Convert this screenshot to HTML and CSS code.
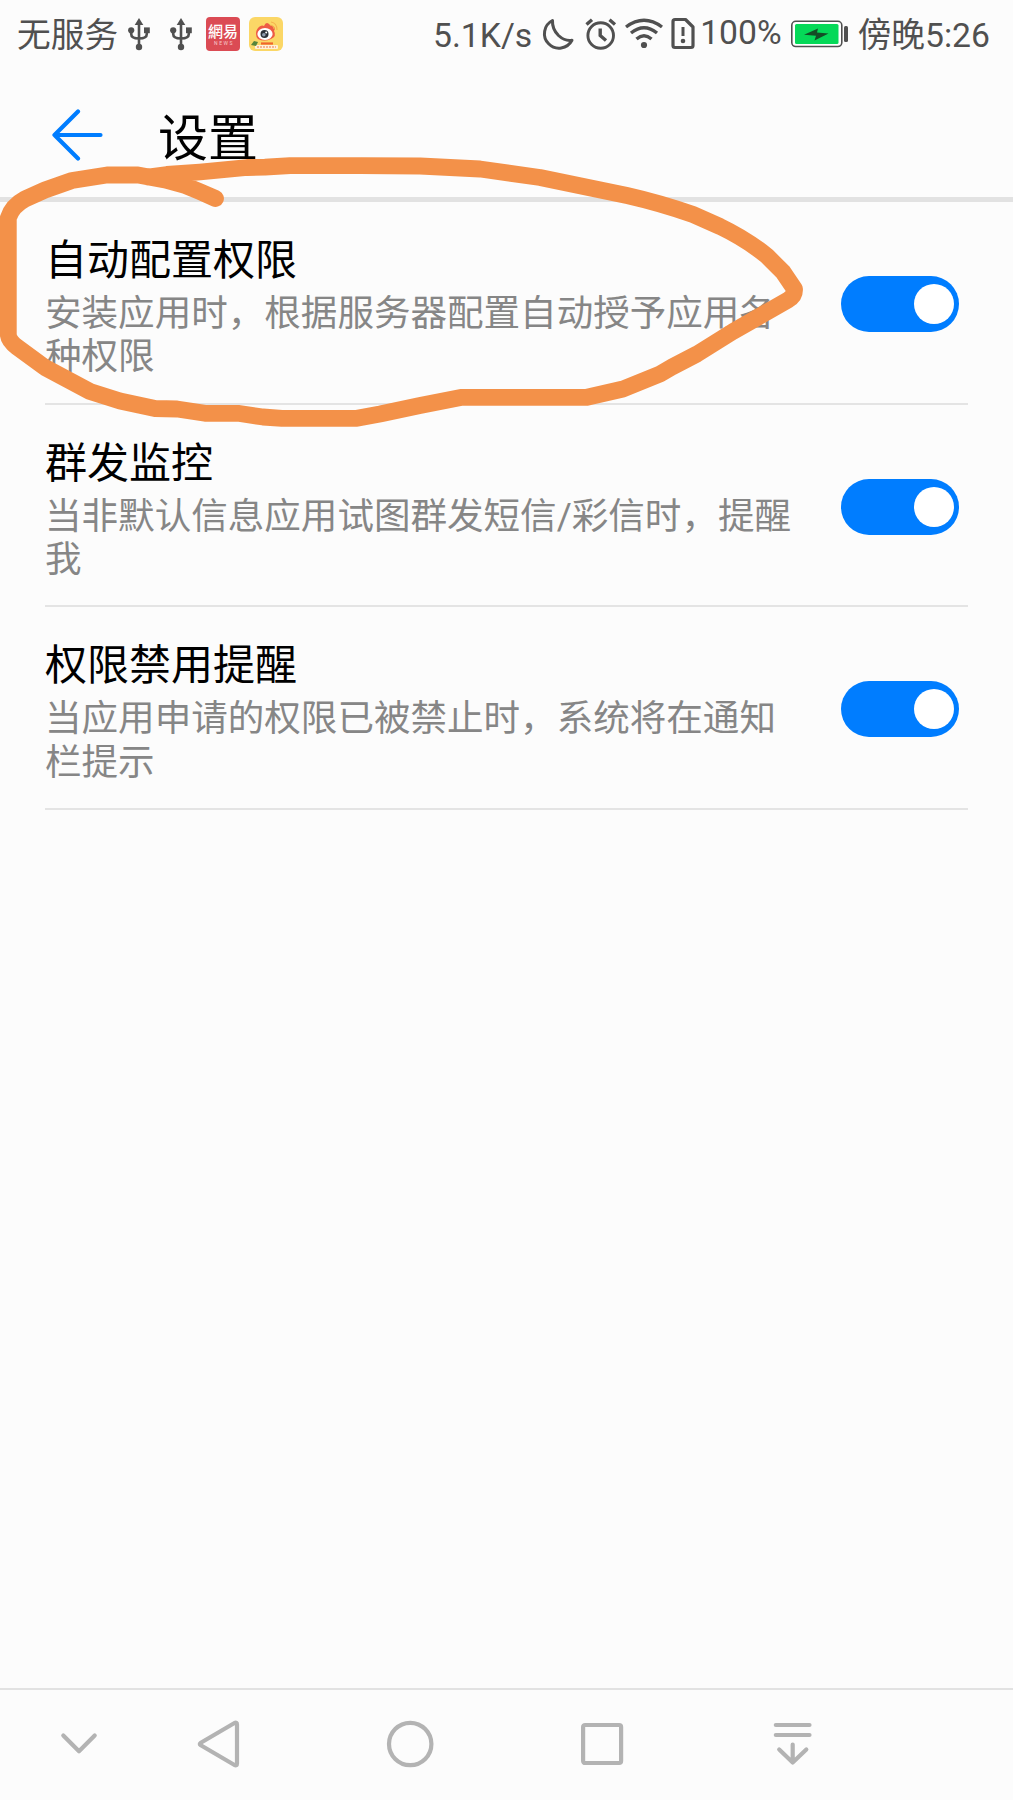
FILE: index.html
```html
<!DOCTYPE html>
<html lang="zh-CN">
<head>
<meta charset="utf-8">
<title>设置</title>
<link rel="stylesheet" href="styles.css">
</head>
<body>
<div class="screen">
  <div class="status">
    <span class="carrier">无服务</span>
    <svg class="usb" width="22" height="34" viewBox="0 0 22 34"><g fill="none" stroke="#505050" stroke-width="2.6"><path d="M11 6V29M3.2 14V17Q3.2 21.5 11 21.5Q18.8 21.5 18.8 17V14"/></g><g fill="#505050"><path d="M11 1L15.3 8H6.7Z"/><circle cx="3.2" cy="13.3" r="3.1"/><rect x="16" y="10.4" width="5.8" height="5.8"/><circle cx="11" cy="30" r="3.2"/></g></svg>
    <svg class="usb second" width="22" height="34" viewBox="0 0 22 34"><g fill="none" stroke="#505050" stroke-width="2.6"><path d="M11 6V29M3.2 14V17Q3.2 21.5 11 21.5Q18.8 21.5 18.8 17V14"/></g><g fill="#505050"><path d="M11 1L15.3 8H6.7Z"/><circle cx="3.2" cy="13.3" r="3.1"/><rect x="16" y="10.4" width="5.8" height="5.8"/><circle cx="11" cy="30" r="3.2"/></g></svg>
    <svg class="news" width="34" height="34" viewBox="0 0 34 34"><rect width="34" height="34" rx="4" fill="#db4b54"/><text class="news-name" x="17" y="19.5" text-anchor="middle">網易</text><text class="news-sub" x="18" y="27.5" text-anchor="middle">NEWS</text></svg>
    <svg class="weibo" width="34" height="34" viewBox="0 0 34 34"><rect width="34" height="34" rx="6" fill="#fbd766"/><path d="M7 17C7 11 12 7 15 9Q17 4 20 7Q21 9 24 9Q27 11 25 14Q28 19 22 22Q15 25 9 22Q7 20 7 17Z" fill="#ee5b45"/><ellipse cx="16" cy="17" rx="7.600" ry="6" fill="#fff"/><circle cx="15.5" cy="17" r="4" fill="#2b3038"/><circle cx="14.800" cy="17.800" r="1.8" fill="#8f9bad"/><circle cx="17.200" cy="15.500" r="1" fill="#fff"/><path d="M22 5Q28 6 28 13M21.500 8Q25 9 25 12" fill="none" stroke="#f5b04e" stroke-width="1.1"/><rect x="6" y="28" width="23" height="4" rx="1" fill="#fff1d8"/><path d="M12 26.500H24" stroke="#f0642d" stroke-width="2.200"/><path d="M8 30H27" stroke="#f4a07a" stroke-width="1.500" stroke-dasharray="2 1"/><path d="M2 28L5 24L9 25L7 29Z" fill="#56853b"/></svg>
    <div class="spacer"></div>
    <span class="speed">5.1K/s</span>
    <svg class="moon" width="34" height="34" viewBox="0 0 34 34"><path d="M11.500 3.500A14.600 14.600 0 1 0 31 23.300Q24 24.500 17.500 18.500Q11 12 11.500 3.500Z" fill="none" stroke="#505050" stroke-width="3" stroke-linejoin="round"/></svg>
    <svg class="alarm" width="32" height="34" viewBox="0 0 32 34"><g fill="none" stroke="#505050" stroke-width="2.900" stroke-linecap="butt"><circle cx="15.700" cy="18.500" r="12.800"/><path stroke-width="3.400" d="M15.200 11.500V18.500L21 23.500M1.500 7.500L7 2.800M30 7.500L24.500 2.800"/></g></svg>
    <svg class="wifi" width="38" height="34" viewBox="0 0 38 34"><g fill="none" stroke="#505050" stroke-width="3.400"><path d="M1 10Q19-3.500 37 10M6 16Q19 5.500 32 16M11.500 22Q19 15.500 26.500 22"/></g><circle cx="19" cy="28" r="3.100" fill="#505050"/></svg>
    <svg class="sim" width="24" height="34" viewBox="0 0 24 34"><path d="M4 2.500H14.500L22 10V28.500Q22 30.500 20 30.500H4Q2 30.500 2 28.500V4.500Q2 2.500 4 2.500Z" fill="none" stroke="#505050" stroke-width="3.200" stroke-linejoin="round"/><path d="M12 10V19" stroke="#505050" stroke-width="3"/><circle cx="12" cy="24" r="2.300" fill="#505050"/></svg>
    <span class="percent">100%</span>
    <svg class="battery" width="58" height="28" viewBox="0 0 58 28"><rect x=".8" y="1.300" width="50" height="25.200" rx="4" fill="#fff" stroke="#505050" stroke-width="1.600"/><rect x="4" y="4" width="43.500" height="20" rx="1.500" fill="#05d958"/><path d="M13 14.800L27 8.500L26 12.500L37.500 13.500L23.500 20.500L25 15.800Z" fill="#144d26"/><rect x="53" y="6" width="4" height="16" rx="1.500" fill="#505050"/></svg>
    <span class="clock">傍晚5:26</span>
  </div>

  <header class="header">
    <svg class="back" width="54" height="52" viewBox="0 0 54 52"><path d="M28 2.500L4.500 26L28 49.500M4.500 26H50.500" fill="none" stroke="#007dff" stroke-width="4.200" stroke-linecap="round" stroke-linejoin="round"/></svg>
    <h1 class="heading">设置</h1>
  </header>

  <main class="list">
    <section class="row">
      <div class="text"><h2 class="title">自动配置权限</h2><p class="desc">安装应用时，根据服务器配置自动授予应用各种权限</p></div>
      <div class="switch"><div class="knob"></div></div>
    </section>
    <section class="row">
      <div class="text"><h2 class="title">群发监控</h2><p class="desc">当非默认信息应用试图群发短信/彩信时，提醒我</p></div>
      <div class="switch"><div class="knob"></div></div>
    </section>
    <section class="row">
      <div class="text"><h2 class="title">权限禁用提醒</h2><p class="desc">当应用申请的权限已被禁止时，系统将在通知栏提示</p></div>
      <div class="switch"><div class="knob"></div></div>
    </section>
  </main>

  <nav class="nav">
    <div class="key first"><svg width="48" height="48" viewBox="0 0 48 48"><path d="M8.300 15.500L24 31.200L39.700 15.500"/></svg></div>
    <div class="key"><svg width="48" height="48" viewBox="0 0 48 48"><path d="M5.800 22.700L39.500 3Q42 2 42 4.500V43.500Q42 46 39.500 45L5.800 25.300Q3.800 24 5.800 22.700Z"/></svg></div>
    <div class="key"><svg width="48" height="48" viewBox="0 0 48 48"><circle cx="24.200" cy="24" r="21.200"/></svg></div>
    <div class="key"><svg width="48" height="48" viewBox="0 0 48 48"><rect x="5.100" y="5" width="38" height="38" rx="2"/></svg></div>
    <div class="key"><svg width="48" height="48" viewBox="0 0 48 48"><path d="M6.800 5H40.500M6.800 15H40.500M23.700 24.500V42.500M10.200 29.500L23.700 42.500L37.300 29.500"/></svg></div>
  </nav>

  <svg class="mark" width="1013" height="440" viewBox="0 0 1013 440"><path d="M215.500 198.500Q199 191 185 185.500L165 180L138 175H107L72 180.500L45 190L25 199Q12 206 8.300 218V335Q9 341 17 347L45 367.500L90 391.500L120 401L155 408.500L177 409L205 413.300H238L263 417L282 418.300H357L380 414L420 405.500L462 397.300H587L623 389L660 374L672 367L697 354L733 331.500L767 312L788 300Q795 296 794.500 289L783 272L767 256Q746 239 720 226.500L693 214.500Q660 203 627 195.500L540 177.500L480 169L420 166L360 165.700H290L265 167.200L247 167.500L200 172L167 174.500L148 177"/></svg>
</div>
</body>
</html>
```
FILE: styles.css
```css
* { box-sizing: border-box; }
body {
  margin: 0;
  background: #fcfcfc;
  font-family: Roboto, "Noto Sans CJK SC", sans-serif;
  font-weight: 400;
}
.screen {
  position: relative;
  width: 1013px;
  height: 1800px;
  display: flex;
  flex-direction: column;
  overflow: hidden;
}
.status {
  display: flex;
  align-items: flex-start;
  height: 70px;
  padding: 17px 23px 0 17px;
  color: #505050;
  font-size: 33.7px;
  line-height: 38px;
  white-space: nowrap;
}
.status svg { flex: none; display: block; }
.usb { margin-left: 10px; }
.usb.second { margin-left: 20px; }
.news { margin-left: 14px; }
.news-name { font: 500 15px "Noto Sans CJK TC", sans-serif; fill: #fff; }
.news-sub { font: 400 5px Roboto, sans-serif; letter-spacing: 1.5px; fill: #f6c9cb; }
.weibo { margin-left: 9px; }
.spacer { flex: 1; }
.moon { margin-left: 9px; }
.alarm { margin-left: 10px; }
.wifi { margin-left: 8px; }
.sim { margin-left: 8px; }
.percent { margin: -3px 0 0 5px; }
.battery { margin: 3px 9px 0 9px; }

.header {
  display: flex;
  height: 132px;
  padding: 39px 0 0 50px;
  border-bottom: 5px solid #e2e2e2;
}
.back { flex: none; }
.heading {
  margin: 1px 0 0 54px;
  font-size: 50px;
  line-height: 58px;
  font-weight: 400;
  color: #000;
}

.list { flex: 1; padding: 0 45px; }
.row {
  display: flex;
  justify-content: space-between;
  align-items: center;
  height: 202.700px;
  padding-right: 9px;
  border-bottom: 2px solid #e4e4e4;
}
.text { width: 758px; padding-top: 9px; }
.title {
  margin: 0;
  font-size: 42px;
  line-height: 52px;
  font-weight: 400;
  color: #000;
}
.desc {
  margin: 5px 0 0;
  font-size: 36.560px;
  line-height: 43.300px;
  color: #868686;
}
.switch {
  display: flex;
  align-items: center;
  justify-content: flex-end;
  width: 118px;
  height: 56px;
  margin-top: 3px;
  padding-right: 5px;
  border-radius: 28px;
  background: #007dff;
}
.knob { width: 40px; height: 40px; border-radius: 50%; background: #fff; }

.nav {
  display: flex;
  align-items: center;
  height: 112.500px;
  padding-bottom: 1px;
  border-top: 2px solid #e2e2e2;
}
.key { width: 191.500px; display: flex; justify-content: center; }
.key.first { width: 123px; padding-left: 34px; }
.key svg {
  flex: none;
  fill: none;
  stroke: #b3b3b3;
  stroke-width: 4.200;
  stroke-linecap: round;
  stroke-linejoin: round;
}
.mark { position: absolute; left: 0; top: 0; }
.mark path {
  fill: none;
  stroke: #f39149;
  stroke-width: 16.800;
  stroke-linecap: round;
  stroke-linejoin: round;
}
```
